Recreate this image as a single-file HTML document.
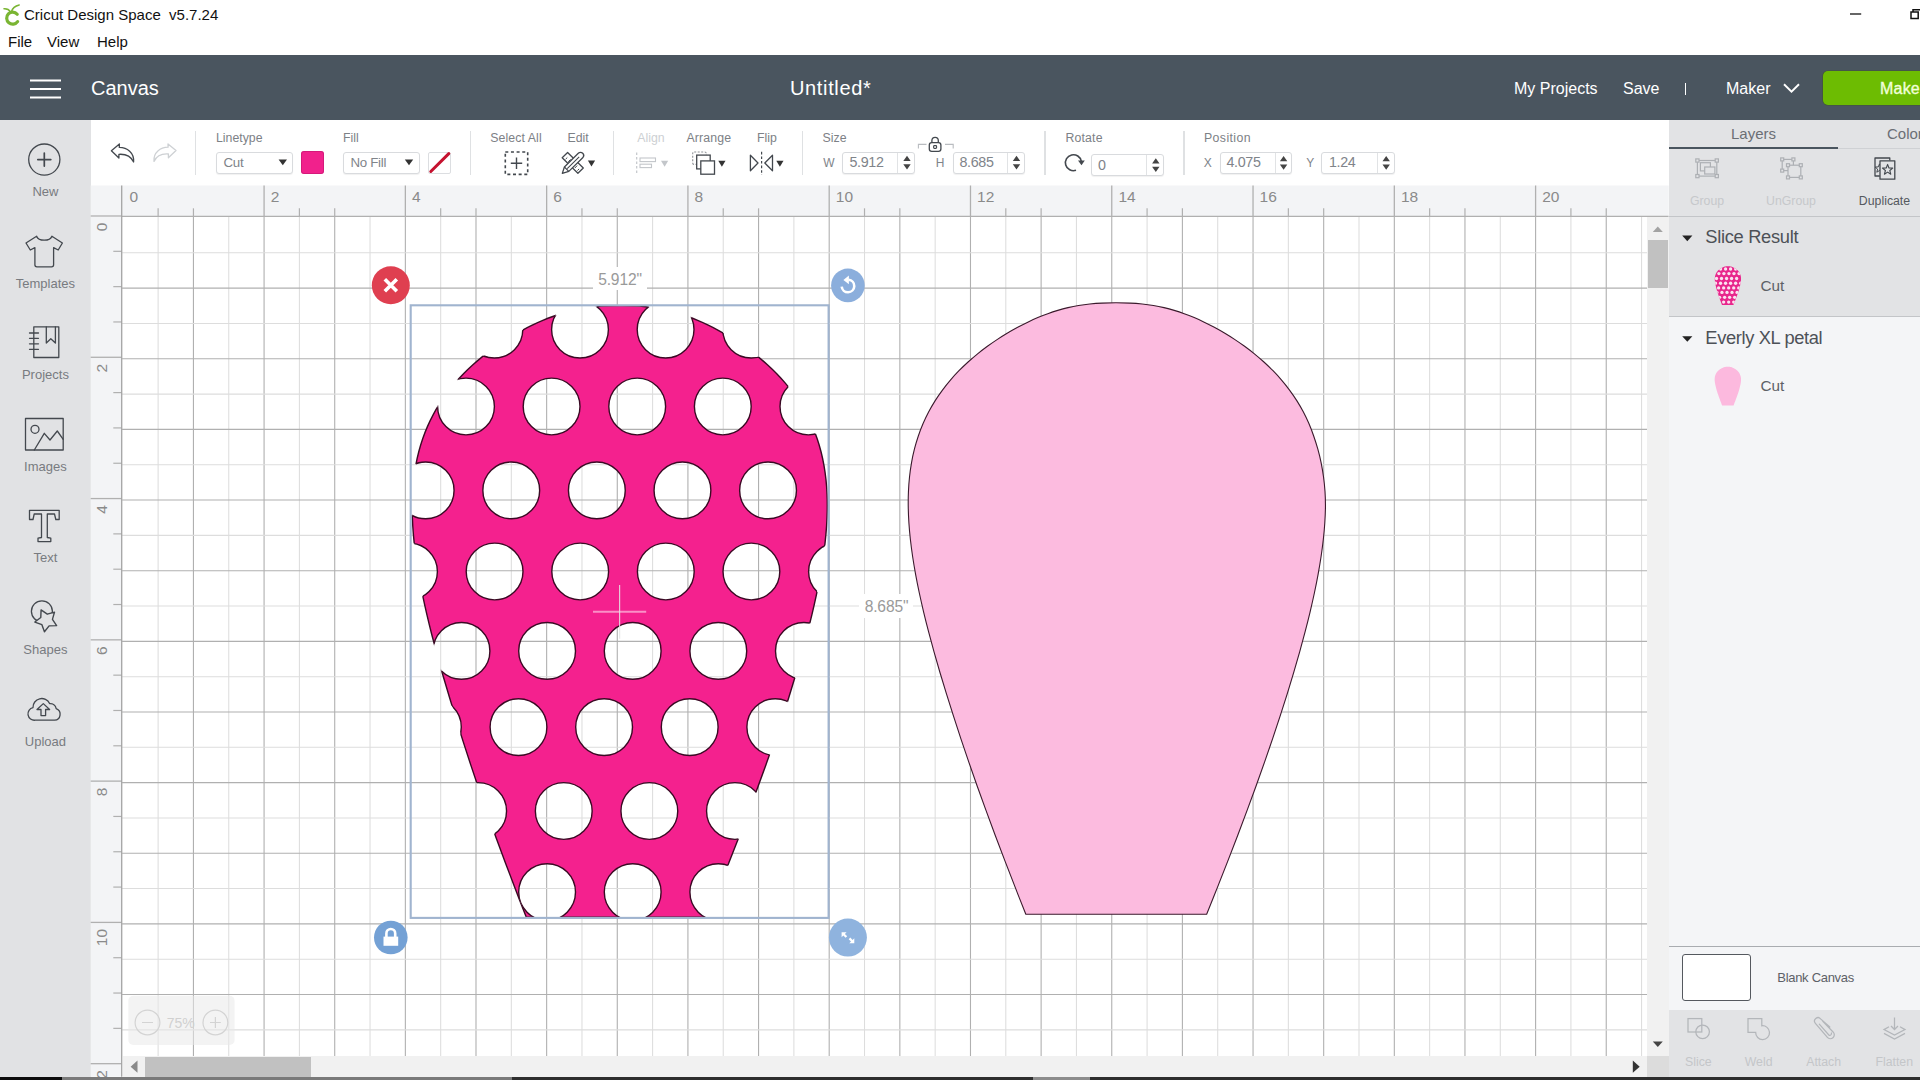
<!DOCTYPE html>
<html lang="en"><head><meta charset="utf-8"><title>Cricut Design Space v5.7.24</title>
<style>
html,body{margin:0;padding:0;}
body{width:1920px;height:1080px;overflow:hidden;position:relative;background:#fff;font-family:"Liberation Sans",sans-serif;}
svg{position:absolute;left:0;top:0;overflow:visible;}
svg text{font-family:"Liberation Sans",sans-serif;}
</style></head><body>

<div style="position:absolute;left:0px;top:0px;width:1920px;height:55px;background:#fff;"></div>
<span style="position:absolute;top:6.2px;font-size:15px;line-height:18.0px;color:#111;white-space:nowrap;left:24px;">Cricut Design Space&nbsp; v5.7.24</span>
<span style="position:absolute;top:33.2px;font-size:15px;line-height:18.0px;color:#111;white-space:nowrap;left:8px;">File</span>
<span style="position:absolute;top:33.2px;font-size:15px;line-height:18.0px;color:#111;white-space:nowrap;left:47px;">View</span>
<span style="position:absolute;top:33.2px;font-size:15px;line-height:18.0px;color:#111;white-space:nowrap;left:97px;">Help</span>
<div style="position:absolute;left:0px;top:55px;width:1920px;height:65.3px;background:#4a555f;"></div>
<span style="position:absolute;top:76.2px;font-size:20px;line-height:24.0px;color:#fff;white-space:nowrap;left:91px;">Canvas</span>
<span style="position:absolute;top:76.2px;font-size:20px;line-height:24.0px;color:#fff;white-space:nowrap;letter-spacing:0.65px;left:790px;">Untitled*</span>
<span style="position:absolute;top:78.6px;font-size:16px;line-height:19.2px;color:#fff;white-space:nowrap;left:1514px;">My Projects</span>
<span style="position:absolute;top:78.6px;font-size:16px;line-height:19.2px;color:#fff;white-space:nowrap;left:1623px;">Save</span>
<div style="position:absolute;left:1684.6px;top:83px;width:1.3px;height:11.5px;background:#fff;"></div>
<span style="position:absolute;top:78.6px;font-size:16px;line-height:19.2px;color:#fff;white-space:nowrap;left:1726px;">Maker</span>
<div style="position:absolute;left:1823px;top:70.6px;width:110px;height:34.6px;background:#6dbc02;border-radius:5px;box-shadow:0 0 0 0.6px rgba(60,90,20,0.6);"></div>
<span style="position:absolute;top:78.6px;font-size:16px;line-height:19.2px;color:#f1ffd9;white-space:nowrap;letter-spacing:0.2px;left:1880px;-webkit-text-stroke:0.35px #f1ffd9;">Make It</span>
<div style="position:absolute;left:0px;top:120.3px;width:90.7px;height:956.4px;background:#e1e2e4;"></div>
<span style="position:absolute;top:184.4px;font-size:13px;line-height:15.6px;color:#787b80;white-space:nowrap;left:-154.6px;width:400px;text-align:center;">New</span>
<span style="position:absolute;top:275.8px;font-size:13px;line-height:15.6px;color:#787b80;white-space:nowrap;left:-154.6px;width:400px;text-align:center;">Templates</span>
<span style="position:absolute;top:367.4px;font-size:13px;line-height:15.6px;color:#787b80;white-space:nowrap;left:-154.6px;width:400px;text-align:center;">Projects</span>
<span style="position:absolute;top:458.8px;font-size:13px;line-height:15.6px;color:#787b80;white-space:nowrap;left:-154.6px;width:400px;text-align:center;">Images</span>
<span style="position:absolute;top:550.4px;font-size:13px;line-height:15.6px;color:#787b80;white-space:nowrap;left:-154.6px;width:400px;text-align:center;">Text</span>
<span style="position:absolute;top:642.1px;font-size:13px;line-height:15.6px;color:#787b80;white-space:nowrap;left:-154.6px;width:400px;text-align:center;">Shapes</span>
<span style="position:absolute;top:733.6px;font-size:13px;line-height:15.6px;color:#787b80;white-space:nowrap;left:-154.6px;width:400px;text-align:center;">Upload</span>
<div style="position:absolute;left:90.7px;top:120.3px;width:1578px;height:65.2px;background:#fff;"></div>
<div style="position:absolute;left:195.0px;top:130.6px;width:1.2px;height:44.6px;background:#dfe1e3;"></div>
<div style="position:absolute;left:469.7px;top:130.6px;width:1.2px;height:44.6px;background:#dfe1e3;"></div>
<div style="position:absolute;left:613.1999999999999px;top:130.6px;width:1.2px;height:44.6px;background:#dfe1e3;"></div>
<div style="position:absolute;left:802.1px;top:130.6px;width:1.2px;height:44.6px;background:#dfe1e3;"></div>
<div style="position:absolute;left:1044.4px;top:130.6px;width:1.2px;height:44.6px;background:#dfe1e3;"></div>
<div style="position:absolute;left:1183.4px;top:130.6px;width:1.2px;height:44.6px;background:#dfe1e3;"></div>
<span style="position:absolute;top:131.1px;font-size:12.3px;line-height:14.8px;color:#7d8186;white-space:nowrap;left:216px;">Linetype</span>
<span style="position:absolute;top:131.1px;font-size:12.3px;line-height:14.8px;color:#7d8186;white-space:nowrap;left:343px;">Fill</span>
<span style="position:absolute;top:131.1px;font-size:12.3px;line-height:14.8px;color:#7d8186;white-space:nowrap;letter-spacing:0.1px;left:490.2px;">Select All</span>
<span style="position:absolute;top:131.1px;font-size:12.3px;line-height:14.8px;color:#7d8186;white-space:nowrap;left:567.5px;">Edit</span>
<span style="position:absolute;top:131.1px;font-size:12.3px;line-height:14.8px;color:#cdd0d3;white-space:nowrap;left:637.3px;">Align</span>
<span style="position:absolute;top:131.1px;font-size:12.3px;line-height:14.8px;color:#7d8186;white-space:nowrap;letter-spacing:0.15px;left:686.5px;">Arrange</span>
<span style="position:absolute;top:131.1px;font-size:12.3px;line-height:14.8px;color:#7d8186;white-space:nowrap;left:757px;">Flip</span>
<span style="position:absolute;top:131.1px;font-size:12.3px;line-height:14.8px;color:#7d8186;white-space:nowrap;left:822.6px;">Size</span>
<span style="position:absolute;top:131.1px;font-size:12.3px;line-height:14.8px;color:#7d8186;white-space:nowrap;letter-spacing:0.15px;left:1065.5px;">Rotate</span>
<span style="position:absolute;top:131.1px;font-size:12.3px;line-height:14.8px;color:#7d8186;white-space:nowrap;letter-spacing:0.4px;left:1204px;">Position</span>
<div style="position:absolute;left:216.2px;top:151.5px;width:75px;height:20.3px;border:1px solid #d9dbde;border-radius:3px;background:#fff;box-shadow:0 1px 1px rgba(0,0,0,0.06)"></div>
<span style="position:absolute;top:155.2px;font-size:13.3px;line-height:16.0px;color:#80848a;white-space:nowrap;letter-spacing:-0.3px;left:223.5px;">Cut</span>
<div style="position:absolute;left:343px;top:151.5px;width:75px;height:20.3px;border:1px solid #d9dbde;border-radius:3px;background:#fff;box-shadow:0 1px 1px rgba(0,0,0,0.06)"></div>
<span style="position:absolute;top:155.2px;font-size:13.3px;line-height:16.0px;color:#80848a;white-space:nowrap;letter-spacing:-0.3px;left:350.5px;">No Fill</span>
<div style="position:absolute;left:301px;top:151px;width:23px;height:23px;background:#f1218c;border-radius:3px;box-shadow:inset 0 0 0 1px rgba(190,20,110,0.55);"></div>
<div style="position:absolute;left:428px;top:151.5px;width:21px;height:20.5px;border:1px solid #dcdee1;border-radius:2px;background:#fff"></div>
<div style="position:absolute;left:842.3px;top:151.5px;width:70.7px;height:20px;border:1px solid #d9dbde;border-radius:3px;background:#fff;box-shadow:0 1px 1px rgba(0,0,0,0.06)"></div>
<span style="position:absolute;top:154.0px;font-size:14.3px;line-height:17.2px;color:#80848a;white-space:nowrap;letter-spacing:-0.35px;left:849.5px;">5.912</span>
<div style="position:absolute;left:897.2px;top:152.5px;width:1px;height:20px;background:#e1e3e5;"></div>
<div style="position:absolute;left:952.7px;top:151.5px;width:70.3px;height:20px;border:1px solid #d9dbde;border-radius:3px;background:#fff;box-shadow:0 1px 1px rgba(0,0,0,0.06)"></div>
<span style="position:absolute;top:154.0px;font-size:14.3px;line-height:17.2px;color:#80848a;white-space:nowrap;letter-spacing:-0.35px;left:959.5px;">8.685</span>
<div style="position:absolute;left:1007.2px;top:152.5px;width:1px;height:20px;background:#e1e3e5;"></div>
<div style="position:absolute;left:1090.7px;top:154px;width:71.6px;height:20px;border:1px solid #d9dbde;border-radius:3px;background:#fff;box-shadow:0 1px 1px rgba(0,0,0,0.06)"></div>
<span style="position:absolute;top:156.5px;font-size:14.3px;line-height:17.2px;color:#80848a;white-space:nowrap;letter-spacing:-0.35px;left:1098px;">0</span>
<div style="position:absolute;left:1146.2px;top:155px;width:1px;height:20px;background:#e1e3e5;"></div>
<div style="position:absolute;left:1219.7px;top:151.5px;width:70.8px;height:20.5px;border:1px solid #d9dbde;border-radius:3px;background:#fff;box-shadow:0 1px 1px rgba(0,0,0,0.06)"></div>
<span style="position:absolute;top:154.3px;font-size:14.3px;line-height:17.2px;color:#80848a;white-space:nowrap;letter-spacing:-0.35px;left:1226.5px;">4.075</span>
<div style="position:absolute;left:1274.7px;top:152.5px;width:1px;height:20.5px;background:#e1e3e5;"></div>
<div style="position:absolute;left:1321.4px;top:151.5px;width:71.2px;height:20.5px;border:1px solid #d9dbde;border-radius:3px;background:#fff;box-shadow:0 1px 1px rgba(0,0,0,0.06)"></div>
<span style="position:absolute;top:154.3px;font-size:14.3px;line-height:17.2px;color:#80848a;white-space:nowrap;letter-spacing:-0.35px;left:1329px;">1.24</span>
<div style="position:absolute;left:1377.2px;top:152.5px;width:1px;height:20.5px;background:#e1e3e5;"></div>
<span style="position:absolute;top:156.0px;font-size:12px;line-height:14.4px;color:#80848a;white-space:nowrap;left:823.2px;">W</span>
<span style="position:absolute;top:156.0px;font-size:12px;line-height:14.4px;color:#80848a;white-space:nowrap;left:935.8px;">H</span>
<span style="position:absolute;top:156.0px;font-size:12px;line-height:14.4px;color:#80848a;white-space:nowrap;left:1203.8px;">X</span>
<span style="position:absolute;top:156.0px;font-size:12px;line-height:14.4px;color:#80848a;white-space:nowrap;left:1306.2px;">Y</span>
<div style="position:absolute;left:1668.6px;top:120.3px;width:252px;height:97px;background:#e2e3e5;"></div>
<div style="position:absolute;left:1668.6px;top:216.7px;width:252px;height:100px;background:#e2e3e5;"></div>
<div style="position:absolute;left:1668.6px;top:316.7px;width:252px;height:693.5px;background:#f4f5f7;"></div>
<div style="position:absolute;left:1668.6px;top:1010px;width:252px;height:66.7px;background:#e2e3e5;"></div>
<div style="position:absolute;left:1668.6px;top:147.3px;width:169.4px;height:2.2px;background:#4a555f;"></div>
<div style="position:absolute;left:1838px;top:147.8px;width:82px;height:1.6px;background:#cfd1d4;"></div>
<div style="position:absolute;left:1668.6px;top:216.2px;width:252px;height:1.2px;background:#c3c5c8;"></div>
<div style="position:absolute;left:1668.6px;top:316.2px;width:252px;height:1.2px;background:#c3c5c8;"></div>
<div style="position:absolute;left:1668.6px;top:946.2px;width:252px;height:1.1px;background:#a9acb0;"></div>
<span style="position:absolute;top:125.2px;font-size:15px;line-height:18.0px;color:#6b6f75;white-space:nowrap;left:1553.5px;width:400px;text-align:center;">Layers</span>
<span style="position:absolute;top:125.2px;font-size:15px;line-height:18.0px;color:#6b6f75;white-space:nowrap;left:1887px;">Color Sync</span>
<span style="position:absolute;top:194.2px;font-size:12.3px;line-height:14.8px;color:#c6c8cb;white-space:nowrap;left:1507px;width:400px;text-align:center;">Group</span>
<span style="position:absolute;top:194.2px;font-size:12.3px;line-height:14.8px;color:#c6c8cb;white-space:nowrap;left:1591px;width:400px;text-align:center;">UnGroup</span>
<span style="position:absolute;top:194.2px;font-size:12.3px;line-height:14.8px;color:#55595f;white-space:nowrap;left:1684.5px;width:400px;text-align:center;">Duplicate</span>
<span style="position:absolute;top:226.2px;font-size:18.3px;line-height:22.0px;color:#4d5157;white-space:nowrap;letter-spacing:-0.3px;left:1705.3px;">Slice Result</span>
<span style="position:absolute;top:327.2px;font-size:18.3px;line-height:22.0px;color:#4d5157;white-space:nowrap;letter-spacing:-0.35px;left:1705.3px;">Everly XL petal</span>
<span style="position:absolute;top:277.0px;font-size:15.3px;line-height:18.4px;color:#5d6167;white-space:nowrap;left:1760.5px;">Cut</span>
<span style="position:absolute;top:377.2px;font-size:15.3px;line-height:18.4px;color:#5d6167;white-space:nowrap;left:1760.5px;">Cut</span>
<span style="position:absolute;top:969.9px;font-size:13px;line-height:15.6px;color:#5d6167;white-space:nowrap;letter-spacing:-0.3px;left:1777.3px;">Blank Canvas</span>
<span style="position:absolute;top:1055.3px;font-size:12.3px;line-height:14.8px;color:#c4c6c9;white-space:nowrap;left:1498.3px;width:400px;text-align:center;">Slice</span>
<span style="position:absolute;top:1055.3px;font-size:12.3px;line-height:14.8px;color:#c4c6c9;white-space:nowrap;left:1558.6px;width:400px;text-align:center;">Weld</span>
<span style="position:absolute;top:1055.3px;font-size:12.3px;line-height:14.8px;color:#c4c6c9;white-space:nowrap;left:1623.7px;width:400px;text-align:center;">Attach</span>
<span style="position:absolute;top:1055.3px;font-size:12.3px;line-height:14.8px;color:#c4c6c9;white-space:nowrap;left:1694.2px;width:400px;text-align:center;">Flatten</span>
<div style="position:absolute;left:1682.2px;top:954.2px;width:66.4px;height:44.4px;border:1.5px solid #55595f;border-radius:3px;background:#fff"></div>
<svg id="stage" width="1920" height="1080" viewBox="0 0 1920 1080">
<rect x="122" y="217" width="1525.2" height="839" fill="#fff"/>
<g id="grid"><line x1="158.12" y1="217" x2="158.12" y2="1056" stroke="#dddddd" stroke-width="1.05"/><line x1="193.44" y1="217" x2="193.44" y2="1056" stroke="#b0b0b0" stroke-width="1.1"/><line x1="228.76" y1="217" x2="228.76" y2="1056" stroke="#dddddd" stroke-width="1.05"/><line x1="264.08" y1="217" x2="264.08" y2="1056" stroke="#b0b0b0" stroke-width="1.1"/><line x1="299.40" y1="217" x2="299.40" y2="1056" stroke="#dddddd" stroke-width="1.05"/><line x1="334.72" y1="217" x2="334.72" y2="1056" stroke="#b0b0b0" stroke-width="1.1"/><line x1="370.04" y1="217" x2="370.04" y2="1056" stroke="#dddddd" stroke-width="1.05"/><line x1="405.36" y1="217" x2="405.36" y2="1056" stroke="#b0b0b0" stroke-width="1.1"/><line x1="440.68" y1="217" x2="440.68" y2="1056" stroke="#dddddd" stroke-width="1.05"/><line x1="476.00" y1="217" x2="476.00" y2="1056" stroke="#b0b0b0" stroke-width="1.1"/><line x1="511.32" y1="217" x2="511.32" y2="1056" stroke="#dddddd" stroke-width="1.05"/><line x1="546.64" y1="217" x2="546.64" y2="1056" stroke="#b0b0b0" stroke-width="1.1"/><line x1="581.96" y1="217" x2="581.96" y2="1056" stroke="#dddddd" stroke-width="1.05"/><line x1="617.28" y1="217" x2="617.28" y2="1056" stroke="#b0b0b0" stroke-width="1.1"/><line x1="652.60" y1="217" x2="652.60" y2="1056" stroke="#dddddd" stroke-width="1.05"/><line x1="687.92" y1="217" x2="687.92" y2="1056" stroke="#b0b0b0" stroke-width="1.1"/><line x1="723.24" y1="217" x2="723.24" y2="1056" stroke="#dddddd" stroke-width="1.05"/><line x1="758.56" y1="217" x2="758.56" y2="1056" stroke="#b0b0b0" stroke-width="1.1"/><line x1="793.88" y1="217" x2="793.88" y2="1056" stroke="#dddddd" stroke-width="1.05"/><line x1="829.20" y1="217" x2="829.20" y2="1056" stroke="#b0b0b0" stroke-width="1.1"/><line x1="864.52" y1="217" x2="864.52" y2="1056" stroke="#dddddd" stroke-width="1.05"/><line x1="899.84" y1="217" x2="899.84" y2="1056" stroke="#b0b0b0" stroke-width="1.1"/><line x1="935.16" y1="217" x2="935.16" y2="1056" stroke="#dddddd" stroke-width="1.05"/><line x1="970.48" y1="217" x2="970.48" y2="1056" stroke="#b0b0b0" stroke-width="1.1"/><line x1="1005.80" y1="217" x2="1005.80" y2="1056" stroke="#dddddd" stroke-width="1.05"/><line x1="1041.12" y1="217" x2="1041.12" y2="1056" stroke="#b0b0b0" stroke-width="1.1"/><line x1="1076.44" y1="217" x2="1076.44" y2="1056" stroke="#dddddd" stroke-width="1.05"/><line x1="1111.76" y1="217" x2="1111.76" y2="1056" stroke="#b0b0b0" stroke-width="1.1"/><line x1="1147.08" y1="217" x2="1147.08" y2="1056" stroke="#dddddd" stroke-width="1.05"/><line x1="1182.40" y1="217" x2="1182.40" y2="1056" stroke="#b0b0b0" stroke-width="1.1"/><line x1="1217.72" y1="217" x2="1217.72" y2="1056" stroke="#dddddd" stroke-width="1.05"/><line x1="1253.04" y1="217" x2="1253.04" y2="1056" stroke="#b0b0b0" stroke-width="1.1"/><line x1="1288.36" y1="217" x2="1288.36" y2="1056" stroke="#dddddd" stroke-width="1.05"/><line x1="1323.68" y1="217" x2="1323.68" y2="1056" stroke="#b0b0b0" stroke-width="1.1"/><line x1="1359.00" y1="217" x2="1359.00" y2="1056" stroke="#dddddd" stroke-width="1.05"/><line x1="1394.32" y1="217" x2="1394.32" y2="1056" stroke="#b0b0b0" stroke-width="1.1"/><line x1="1429.64" y1="217" x2="1429.64" y2="1056" stroke="#dddddd" stroke-width="1.05"/><line x1="1464.96" y1="217" x2="1464.96" y2="1056" stroke="#b0b0b0" stroke-width="1.1"/><line x1="1500.28" y1="217" x2="1500.28" y2="1056" stroke="#dddddd" stroke-width="1.05"/><line x1="1535.60" y1="217" x2="1535.60" y2="1056" stroke="#b0b0b0" stroke-width="1.1"/><line x1="1570.92" y1="217" x2="1570.92" y2="1056" stroke="#dddddd" stroke-width="1.05"/><line x1="1606.24" y1="217" x2="1606.24" y2="1056" stroke="#b0b0b0" stroke-width="1.1"/><line x1="1641.56" y1="217" x2="1641.56" y2="1056" stroke="#dddddd" stroke-width="1.05"/><line x1="122" y1="252.82" x2="1647.2" y2="252.82" stroke="#dddddd" stroke-width="1.05"/><line x1="122" y1="288.14" x2="1647.2" y2="288.14" stroke="#b0b0b0" stroke-width="1.1"/><line x1="122" y1="323.46" x2="1647.2" y2="323.46" stroke="#dddddd" stroke-width="1.05"/><line x1="122" y1="358.78" x2="1647.2" y2="358.78" stroke="#b0b0b0" stroke-width="1.1"/><line x1="122" y1="394.10" x2="1647.2" y2="394.10" stroke="#dddddd" stroke-width="1.05"/><line x1="122" y1="429.42" x2="1647.2" y2="429.42" stroke="#b0b0b0" stroke-width="1.1"/><line x1="122" y1="464.74" x2="1647.2" y2="464.74" stroke="#dddddd" stroke-width="1.05"/><line x1="122" y1="500.06" x2="1647.2" y2="500.06" stroke="#b0b0b0" stroke-width="1.1"/><line x1="122" y1="535.38" x2="1647.2" y2="535.38" stroke="#dddddd" stroke-width="1.05"/><line x1="122" y1="570.70" x2="1647.2" y2="570.70" stroke="#b0b0b0" stroke-width="1.1"/><line x1="122" y1="606.02" x2="1647.2" y2="606.02" stroke="#dddddd" stroke-width="1.05"/><line x1="122" y1="641.34" x2="1647.2" y2="641.34" stroke="#b0b0b0" stroke-width="1.1"/><line x1="122" y1="676.66" x2="1647.2" y2="676.66" stroke="#dddddd" stroke-width="1.05"/><line x1="122" y1="711.98" x2="1647.2" y2="711.98" stroke="#b0b0b0" stroke-width="1.1"/><line x1="122" y1="747.30" x2="1647.2" y2="747.30" stroke="#dddddd" stroke-width="1.05"/><line x1="122" y1="782.62" x2="1647.2" y2="782.62" stroke="#b0b0b0" stroke-width="1.1"/><line x1="122" y1="817.94" x2="1647.2" y2="817.94" stroke="#dddddd" stroke-width="1.05"/><line x1="122" y1="853.26" x2="1647.2" y2="853.26" stroke="#b0b0b0" stroke-width="1.1"/><line x1="122" y1="888.58" x2="1647.2" y2="888.58" stroke="#dddddd" stroke-width="1.05"/><line x1="122" y1="923.90" x2="1647.2" y2="923.90" stroke="#b0b0b0" stroke-width="1.1"/><line x1="122" y1="959.22" x2="1647.2" y2="959.22" stroke="#dddddd" stroke-width="1.05"/><line x1="122" y1="994.54" x2="1647.2" y2="994.54" stroke="#b0b0b0" stroke-width="1.1"/><line x1="122" y1="1029.86" x2="1647.2" y2="1029.86" stroke="#dddddd" stroke-width="1.05"/></g>
<rect x="90.7" y="185.5" width="1578" height="31" fill="#f3f4f6"/>
<rect x="90.7" y="216.5" width="31.4" height="860.2" fill="#f3f4f6"/>
<g id="rulers"><text x="129.4" y="202.3" font-size="15.5" fill="#8a8a8a">0</text><line x1="158.12" y1="208.3" x2="158.12" y2="217" stroke="#b0b0b0" stroke-width="1.2"/><line x1="193.44" y1="208.3" x2="193.44" y2="217" stroke="#b0b0b0" stroke-width="1.2"/><line x1="264.08" y1="185.5" x2="264.08" y2="217" stroke="#b0b0b0" stroke-width="1.3"/><text x="270.7" y="202.3" font-size="15.5" fill="#8a8a8a">2</text><line x1="299.40" y1="208.3" x2="299.40" y2="217" stroke="#b0b0b0" stroke-width="1.2"/><line x1="334.72" y1="208.3" x2="334.72" y2="217" stroke="#b0b0b0" stroke-width="1.2"/><line x1="405.36" y1="185.5" x2="405.36" y2="217" stroke="#b0b0b0" stroke-width="1.3"/><text x="412.0" y="202.3" font-size="15.5" fill="#8a8a8a">4</text><line x1="440.68" y1="208.3" x2="440.68" y2="217" stroke="#b0b0b0" stroke-width="1.2"/><line x1="476.00" y1="208.3" x2="476.00" y2="217" stroke="#b0b0b0" stroke-width="1.2"/><line x1="546.64" y1="185.5" x2="546.64" y2="217" stroke="#b0b0b0" stroke-width="1.3"/><text x="553.2" y="202.3" font-size="15.5" fill="#8a8a8a">6</text><line x1="581.96" y1="208.3" x2="581.96" y2="217" stroke="#b0b0b0" stroke-width="1.2"/><line x1="617.28" y1="208.3" x2="617.28" y2="217" stroke="#b0b0b0" stroke-width="1.2"/><line x1="687.92" y1="185.5" x2="687.92" y2="217" stroke="#b0b0b0" stroke-width="1.3"/><text x="694.5" y="202.3" font-size="15.5" fill="#8a8a8a">8</text><line x1="723.24" y1="208.3" x2="723.24" y2="217" stroke="#b0b0b0" stroke-width="1.2"/><line x1="758.56" y1="208.3" x2="758.56" y2="217" stroke="#b0b0b0" stroke-width="1.2"/><line x1="829.20" y1="185.5" x2="829.20" y2="217" stroke="#b0b0b0" stroke-width="1.3"/><text x="835.8" y="202.3" font-size="15.5" fill="#8a8a8a">10</text><line x1="864.52" y1="208.3" x2="864.52" y2="217" stroke="#b0b0b0" stroke-width="1.2"/><line x1="899.84" y1="208.3" x2="899.84" y2="217" stroke="#b0b0b0" stroke-width="1.2"/><line x1="970.48" y1="185.5" x2="970.48" y2="217" stroke="#b0b0b0" stroke-width="1.3"/><text x="977.1" y="202.3" font-size="15.5" fill="#8a8a8a">12</text><line x1="1005.80" y1="208.3" x2="1005.80" y2="217" stroke="#b0b0b0" stroke-width="1.2"/><line x1="1041.12" y1="208.3" x2="1041.12" y2="217" stroke="#b0b0b0" stroke-width="1.2"/><line x1="1111.76" y1="185.5" x2="1111.76" y2="217" stroke="#b0b0b0" stroke-width="1.3"/><text x="1118.4" y="202.3" font-size="15.5" fill="#8a8a8a">14</text><line x1="1147.08" y1="208.3" x2="1147.08" y2="217" stroke="#b0b0b0" stroke-width="1.2"/><line x1="1182.40" y1="208.3" x2="1182.40" y2="217" stroke="#b0b0b0" stroke-width="1.2"/><line x1="1253.04" y1="185.5" x2="1253.04" y2="217" stroke="#b0b0b0" stroke-width="1.3"/><text x="1259.6" y="202.3" font-size="15.5" fill="#8a8a8a">16</text><line x1="1288.36" y1="208.3" x2="1288.36" y2="217" stroke="#b0b0b0" stroke-width="1.2"/><line x1="1323.68" y1="208.3" x2="1323.68" y2="217" stroke="#b0b0b0" stroke-width="1.2"/><line x1="1394.32" y1="185.5" x2="1394.32" y2="217" stroke="#b0b0b0" stroke-width="1.3"/><text x="1400.9" y="202.3" font-size="15.5" fill="#8a8a8a">18</text><line x1="1429.64" y1="208.3" x2="1429.64" y2="217" stroke="#b0b0b0" stroke-width="1.2"/><line x1="1464.96" y1="208.3" x2="1464.96" y2="217" stroke="#b0b0b0" stroke-width="1.2"/><line x1="1535.60" y1="185.5" x2="1535.60" y2="217" stroke="#b0b0b0" stroke-width="1.3"/><text x="1542.2" y="202.3" font-size="15.5" fill="#8a8a8a">20</text><line x1="1570.92" y1="208.3" x2="1570.92" y2="217" stroke="#b0b0b0" stroke-width="1.2"/><line x1="1606.24" y1="208.3" x2="1606.24" y2="217" stroke="#b0b0b0" stroke-width="1.2"/><line x1="90.7" y1="216.00" x2="122" y2="216.00" stroke="#b0b0b0" stroke-width="1.3"/><text transform="translate(107.2,222.5) rotate(-90)" font-size="15.5" fill="#8a8a8a" text-anchor="end">0</text><line x1="113.3" y1="251.32" x2="122" y2="251.32" stroke="#b0b0b0" stroke-width="1.2"/><line x1="113.3" y1="286.64" x2="122" y2="286.64" stroke="#b0b0b0" stroke-width="1.2"/><line x1="113.3" y1="321.96" x2="122" y2="321.96" stroke="#b0b0b0" stroke-width="1.2"/><line x1="90.7" y1="357.28" x2="122" y2="357.28" stroke="#b0b0b0" stroke-width="1.3"/><text transform="translate(107.2,363.8) rotate(-90)" font-size="15.5" fill="#8a8a8a" text-anchor="end">2</text><line x1="113.3" y1="392.60" x2="122" y2="392.60" stroke="#b0b0b0" stroke-width="1.2"/><line x1="113.3" y1="427.92" x2="122" y2="427.92" stroke="#b0b0b0" stroke-width="1.2"/><line x1="113.3" y1="463.24" x2="122" y2="463.24" stroke="#b0b0b0" stroke-width="1.2"/><line x1="90.7" y1="498.56" x2="122" y2="498.56" stroke="#b0b0b0" stroke-width="1.3"/><text transform="translate(107.2,505.1) rotate(-90)" font-size="15.5" fill="#8a8a8a" text-anchor="end">4</text><line x1="113.3" y1="533.88" x2="122" y2="533.88" stroke="#b0b0b0" stroke-width="1.2"/><line x1="113.3" y1="569.20" x2="122" y2="569.20" stroke="#b0b0b0" stroke-width="1.2"/><line x1="113.3" y1="604.52" x2="122" y2="604.52" stroke="#b0b0b0" stroke-width="1.2"/><line x1="90.7" y1="639.84" x2="122" y2="639.84" stroke="#b0b0b0" stroke-width="1.3"/><text transform="translate(107.2,646.3) rotate(-90)" font-size="15.5" fill="#8a8a8a" text-anchor="end">6</text><line x1="113.3" y1="675.16" x2="122" y2="675.16" stroke="#b0b0b0" stroke-width="1.2"/><line x1="113.3" y1="710.48" x2="122" y2="710.48" stroke="#b0b0b0" stroke-width="1.2"/><line x1="113.3" y1="745.80" x2="122" y2="745.80" stroke="#b0b0b0" stroke-width="1.2"/><line x1="90.7" y1="781.12" x2="122" y2="781.12" stroke="#b0b0b0" stroke-width="1.3"/><text transform="translate(107.2,787.6) rotate(-90)" font-size="15.5" fill="#8a8a8a" text-anchor="end">8</text><line x1="113.3" y1="816.44" x2="122" y2="816.44" stroke="#b0b0b0" stroke-width="1.2"/><line x1="113.3" y1="851.76" x2="122" y2="851.76" stroke="#b0b0b0" stroke-width="1.2"/><line x1="113.3" y1="887.08" x2="122" y2="887.08" stroke="#b0b0b0" stroke-width="1.2"/><line x1="90.7" y1="922.40" x2="122" y2="922.40" stroke="#b0b0b0" stroke-width="1.3"/><text transform="translate(107.2,928.9) rotate(-90)" font-size="15.5" fill="#8a8a8a" text-anchor="end">10</text><line x1="113.3" y1="957.72" x2="122" y2="957.72" stroke="#b0b0b0" stroke-width="1.2"/><line x1="113.3" y1="993.04" x2="122" y2="993.04" stroke="#b0b0b0" stroke-width="1.2"/><line x1="113.3" y1="1028.36" x2="122" y2="1028.36" stroke="#b0b0b0" stroke-width="1.2"/><line x1="90.7" y1="1063.68" x2="122" y2="1063.68" stroke="#b0b0b0" stroke-width="1.3"/><text transform="translate(107.2,1070.2) rotate(-90)" font-size="15.5" fill="#8a8a8a" text-anchor="end">12</text><line x1="122" y1="216.4" x2="1668.6" y2="216.4" stroke="#b0b0b0" stroke-width="1.4"/><line x1="121.7" y1="185.5" x2="121.7" y2="1076.7" stroke="#a4a4a4" stroke-width="1.3"/></g>
<defs><path id="petal" d="M1022.73,914.30C1021.00,909.82 1015.73,896.28 1012.33,887.42C1008.93,878.57 1005.59,869.81 1002.33,861.15C999.07,852.50 995.86,843.94 992.77,835.48C989.68,827.03 986.69,818.67 983.78,810.42C980.87,802.17 978.04,794.01 975.29,785.96C972.53,777.91 969.85,769.96 967.25,762.10C964.65,754.25 962.13,746.50 959.68,738.85C957.23,731.20 954.87,723.65 952.57,716.20C950.27,708.76 948.05,701.41 945.87,694.16C943.69,686.91 941.53,679.77 939.48,672.72C937.44,665.67 935.48,658.73 933.60,651.88C931.73,645.04 929.94,638.29 928.25,631.65C926.56,625.01 924.95,618.46 923.45,612.02C921.95,605.58 920.54,599.24 919.25,593.00C917.95,586.76 916.75,580.62 915.68,574.58C914.60,568.54 913.63,562.60 912.79,556.76C911.95,550.92 911.23,545.19 910.64,539.55C910.05,533.91 909.58,528.38 909.25,522.94C908.93,517.50 908.73,512.17 908.69,506.94C908.64,501.70 908.73,496.57 908.98,491.53C909.22,486.50 909.61,481.57 910.16,476.74C910.70,471.91 911.40,467.18 912.25,462.54C913.10,457.91 914.10,453.39 915.26,448.96C916.41,444.53 917.73,440.20 919.19,435.97C920.65,431.74 922.27,427.62 924.02,423.59C925.78,419.56 927.69,415.64 929.74,411.81C931.78,407.99 933.97,404.26 936.28,400.64C938.59,397.02 941.05,393.49 943.60,390.07C946.16,386.65 948.84,383.33 951.62,380.11C954.39,376.88 957.29,373.76 960.25,370.74C963.21,367.72 966.28,364.81 969.39,361.99C972.51,359.17 975.71,356.45 978.95,353.83C982.19,351.22 985.49,348.70 988.81,346.28C992.13,343.87 995.50,341.55 998.87,339.34C1002.24,337.12 1005.64,335.01 1009.02,333.00C1012.41,330.98 1015.81,329.07 1019.18,327.26C1022.56,325.45 1025.92,323.74 1029.28,322.13C1032.63,320.52 1035.98,319.01 1039.31,317.60C1042.65,316.19 1045.96,314.88 1049.29,313.67C1052.62,312.46 1055.93,311.36 1059.30,310.35C1062.66,309.34 1066.01,308.44 1069.47,307.63C1072.93,306.83 1076.41,306.12 1080.05,305.52C1083.69,304.91 1087.63,304.41 1091.29,304.01C1094.96,303.61 1097.90,303.30 1102.02,303.10C1106.13,302.90 1111.34,302.80 1116.00,302.80C1120.66,302.80 1125.62,302.90 1129.98,303.10C1134.35,303.30 1138.29,303.61 1142.21,304.01C1146.12,304.41 1149.81,304.91 1153.45,305.52C1157.09,306.12 1160.57,306.83 1164.03,307.63C1167.49,308.44 1170.84,309.34 1174.20,310.35C1177.57,311.36 1180.88,312.46 1184.21,313.67C1187.54,314.88 1190.85,316.19 1194.19,317.60C1197.52,319.01 1200.87,320.52 1204.22,322.13C1207.58,323.74 1210.95,325.45 1214.32,327.26C1217.69,329.07 1221.08,330.98 1224.46,333.00C1227.83,335.01 1231.22,337.12 1234.58,339.34C1237.93,341.55 1241.29,343.87 1244.59,346.28C1247.90,348.70 1251.19,351.22 1254.41,353.83C1257.63,356.45 1260.82,359.17 1263.92,361.99C1267.02,364.81 1270.06,367.72 1273.01,370.74C1275.95,373.76 1278.83,376.88 1281.58,380.11C1284.34,383.33 1287.00,386.65 1289.54,390.07C1292.07,393.49 1294.50,397.02 1296.79,400.64C1299.08,404.26 1301.25,407.99 1303.27,411.81C1305.29,415.64 1307.18,419.56 1308.91,423.59C1310.65,427.62 1312.24,431.74 1313.68,435.97C1315.11,440.20 1316.40,444.53 1317.53,448.96C1318.66,453.39 1319.64,457.91 1320.46,462.54C1321.28,467.18 1321.95,471.91 1322.46,476.74C1322.98,481.57 1323.34,486.50 1323.55,491.53C1323.77,496.57 1323.83,501.70 1323.75,506.94C1323.67,512.17 1323.45,517.50 1323.09,522.94C1322.73,528.38 1322.23,533.91 1321.61,539.55C1320.98,545.19 1320.22,550.92 1319.35,556.76C1318.47,562.60 1317.46,568.54 1316.35,574.58C1315.24,580.62 1314.01,586.76 1312.68,593.00C1311.34,599.24 1309.90,605.58 1308.36,612.02C1306.82,618.46 1305.17,625.01 1303.44,631.65C1301.71,638.29 1299.88,645.04 1297.97,651.88C1296.05,658.73 1294.05,665.67 1291.96,672.72C1289.87,679.77 1287.73,686.91 1285.45,694.16C1283.17,701.41 1280.76,708.76 1278.28,716.20C1275.80,723.65 1273.22,731.20 1270.57,738.85C1267.92,746.50 1265.19,754.25 1262.38,762.10C1259.57,769.96 1256.69,777.91 1253.72,785.96C1250.75,794.01 1247.70,802.17 1244.58,810.42C1241.45,818.67 1238.24,827.03 1234.96,835.48C1231.67,843.94 1228.31,852.50 1224.87,861.15C1221.43,869.81 1217.91,878.57 1214.33,887.42C1210.75,896.28 1205.21,909.82 1203.38,914.30Z"/><path id="petalR" d="M1025.83,914.30C1024.06,909.82 1018.69,896.28 1015.23,887.42C1011.76,878.57 1008.36,869.81 1005.03,861.15C1001.71,852.50 998.45,843.94 995.28,835.48C992.10,827.03 989.00,818.67 985.99,810.42C982.97,802.17 980.02,794.01 977.16,785.96C974.30,777.91 971.51,769.96 968.81,762.10C966.10,754.25 963.47,746.50 960.92,738.85C958.37,731.20 955.90,723.65 953.51,716.20C951.11,708.76 948.80,701.41 946.55,694.16C944.31,686.91 942.13,679.77 940.04,672.72C937.95,665.67 935.95,658.73 934.03,651.88C932.12,645.04 930.29,638.29 928.56,631.65C926.83,625.01 925.18,618.46 923.64,612.02C922.10,605.58 920.66,599.24 919.32,593.00C917.99,586.76 916.76,580.62 915.65,574.58C914.54,568.54 913.53,562.60 912.65,556.76C911.78,550.92 911.02,545.19 910.39,539.55C909.77,533.91 909.27,528.38 908.91,522.94C908.55,517.50 908.33,512.17 908.25,506.94C908.17,501.70 908.23,496.57 908.45,491.53C908.66,486.50 909.02,481.57 909.54,476.74C910.05,471.91 910.72,467.18 911.54,462.54C912.36,457.91 913.34,453.39 914.47,448.96C915.60,444.53 916.89,440.20 918.32,435.97C919.76,431.74 921.35,427.62 923.09,423.59C924.82,419.56 926.71,415.64 928.73,411.81C930.75,407.99 932.92,404.26 935.21,400.64C937.50,397.02 939.93,393.49 942.46,390.07C945.00,386.65 947.66,383.33 950.42,380.11C953.17,376.88 956.05,373.76 958.99,370.74C961.94,367.72 964.98,364.81 968.08,361.99C971.18,359.17 974.37,356.45 977.59,353.83C980.81,351.22 984.10,348.70 987.41,346.28C990.71,343.87 994.07,341.55 997.42,339.34C1000.78,337.12 1004.17,335.01 1007.54,333.00C1010.92,330.98 1014.31,329.07 1017.68,327.26C1021.05,325.45 1024.42,323.74 1027.78,322.13C1031.13,320.52 1034.48,319.01 1037.81,317.60C1041.15,316.19 1044.46,314.88 1047.79,313.67C1051.12,312.46 1054.43,311.36 1057.80,310.35C1061.16,309.34 1064.51,308.44 1067.97,307.63C1071.43,306.83 1074.91,306.12 1078.55,305.52C1082.19,304.91 1085.88,304.41 1089.79,304.01C1093.71,303.61 1097.65,303.30 1102.02,303.10C1106.38,302.90 1111.34,302.80 1116.00,302.80C1120.66,302.80 1125.62,302.90 1129.98,303.10C1134.35,303.30 1138.29,303.61 1142.21,304.01C1146.12,304.41 1149.81,304.91 1153.45,305.52C1157.09,306.12 1160.57,306.83 1164.03,307.63C1167.49,308.44 1170.84,309.34 1174.20,310.35C1177.57,311.36 1180.88,312.46 1184.21,313.67C1187.54,314.88 1190.85,316.19 1194.19,317.60C1197.52,319.01 1200.87,320.52 1204.22,322.13C1207.58,323.74 1210.95,325.45 1214.32,327.26C1217.69,329.07 1221.08,330.98 1224.46,333.00C1227.83,335.01 1231.22,337.12 1234.58,339.34C1237.93,341.55 1241.29,343.87 1244.59,346.28C1247.90,348.70 1251.19,351.22 1254.41,353.83C1257.63,356.45 1260.82,359.17 1263.92,361.99C1267.02,364.81 1270.06,367.72 1273.01,370.74C1275.95,373.76 1278.83,376.88 1281.58,380.11C1284.34,383.33 1287.00,386.65 1289.54,390.07C1292.07,393.49 1294.50,397.02 1296.79,400.64C1299.08,404.26 1301.25,407.99 1303.27,411.81C1305.29,415.64 1307.18,419.56 1308.91,423.59C1310.65,427.62 1312.20,431.74 1313.68,435.97C1315.16,440.20 1316.55,444.53 1317.78,448.96C1319.02,453.39 1320.14,457.91 1321.10,462.54C1322.05,467.18 1322.85,471.91 1323.50,476.74C1324.15,481.57 1324.69,486.50 1325.01,491.53C1325.34,496.57 1325.49,501.70 1325.45,506.94C1325.41,512.17 1325.15,517.50 1324.79,522.94C1324.43,528.38 1323.93,533.91 1323.31,539.55C1322.68,545.19 1321.92,550.92 1321.05,556.76C1320.17,562.60 1319.16,568.54 1318.05,574.58C1316.94,580.62 1315.71,586.76 1314.38,593.00C1313.04,599.24 1311.60,605.58 1310.06,612.02C1308.52,618.46 1306.87,625.01 1305.14,631.65C1303.41,638.29 1301.58,645.04 1299.67,651.88C1297.75,658.73 1295.75,665.67 1293.66,672.72C1291.57,679.77 1289.41,686.91 1287.15,694.16C1284.89,701.41 1282.53,708.76 1280.10,716.20C1277.67,723.65 1275.15,731.20 1272.56,738.85C1269.97,746.50 1267.30,754.25 1264.55,762.10C1261.80,769.96 1258.97,777.91 1256.06,785.96C1253.15,794.01 1250.16,802.17 1247.10,810.42C1244.03,818.67 1240.89,827.03 1237.67,835.48C1234.44,843.94 1231.14,852.50 1227.77,861.15C1224.40,869.81 1220.94,878.57 1217.43,887.42C1213.91,896.28 1208.47,909.82 1206.68,914.30Z"/></defs>
<use href="#petalR" fill="#fcbbdf" stroke="#3a1a2c" stroke-width="1.1"/>
<defs><g id="dots"><circle cx="408.80" cy="329.60" r="28.4"/><circle cx="494.40" cy="329.60" r="28.4"/><circle cx="580.00" cy="329.60" r="28.4"/><circle cx="665.60" cy="329.60" r="28.4"/><circle cx="751.20" cy="329.60" r="28.4"/><circle cx="836.80" cy="329.60" r="28.4"/><circle cx="466.00" cy="406.50" r="28.4"/><circle cx="551.60" cy="406.50" r="28.4"/><circle cx="637.20" cy="406.50" r="28.4"/><circle cx="722.80" cy="406.50" r="28.4"/><circle cx="808.40" cy="406.50" r="28.4"/><circle cx="425.65" cy="490.40" r="28.4"/><circle cx="511.25" cy="490.40" r="28.4"/><circle cx="596.85" cy="490.40" r="28.4"/><circle cx="682.45" cy="490.40" r="28.4"/><circle cx="768.05" cy="490.40" r="28.4"/><circle cx="409.00" cy="571.50" r="28.4"/><circle cx="494.60" cy="571.50" r="28.4"/><circle cx="580.20" cy="571.50" r="28.4"/><circle cx="665.80" cy="571.50" r="28.4"/><circle cx="751.40" cy="571.50" r="28.4"/><circle cx="837.00" cy="571.50" r="28.4"/><circle cx="461.50" cy="650.90" r="28.4"/><circle cx="547.10" cy="650.90" r="28.4"/><circle cx="632.70" cy="650.90" r="28.4"/><circle cx="718.30" cy="650.90" r="28.4"/><circle cx="803.90" cy="650.90" r="28.4"/><circle cx="432.90" cy="727.10" r="28.4"/><circle cx="518.50" cy="727.10" r="28.4"/><circle cx="604.10" cy="727.10" r="28.4"/><circle cx="689.70" cy="727.10" r="28.4"/><circle cx="775.30" cy="727.10" r="28.4"/><circle cx="478.15" cy="811.00" r="28.4"/><circle cx="563.75" cy="811.00" r="28.4"/><circle cx="649.35" cy="811.00" r="28.4"/><circle cx="734.95" cy="811.00" r="28.4"/><circle cx="820.55" cy="811.00" r="28.4"/><circle cx="461.50" cy="892.10" r="28.4"/><circle cx="547.10" cy="892.10" r="28.4"/><circle cx="632.70" cy="892.10" r="28.4"/><circle cx="718.30" cy="892.10" r="28.4"/><circle cx="803.90" cy="892.10" r="28.4"/></g><mask id="mHoles" maskUnits="userSpaceOnUse" x="380" y="280" width="480" height="660"><rect x="380" y="280" width="480" height="660" fill="#fff"/><use href="#dots" fill="#000"/></mask><clipPath id="cPet"><use href="#petal" transform="translate(-496.5,2.8)"/></clipPath></defs>
<g mask="url(#mHoles)"><use href="#petal" transform="translate(-496.5,2.8)" fill="#f4218e" stroke="#3a0a24" stroke-width="1.4"/></g>
<g clip-path="url(#cPet)"><use href="#dots" fill="none" stroke="#3a0a24" stroke-width="1.4"/></g>
<rect x="410.7" y="305.3" width="417.9" height="612.6" fill="none" stroke="#a0b4cf" stroke-width="2.1"/>
<path d="M593,611.7H646.2" stroke="#fff" stroke-opacity="0.5" stroke-width="2"/><path d="M619.6,585V638.7" stroke="#e4e4e4" stroke-opacity="0.85" stroke-width="1.2"/>
<rect x="593" y="267" width="54" height="23" fill="#fff"/><text x="620" y="284.8" font-size="15.6" fill="#9a9a9a" text-anchor="middle" letter-spacing="-0.15">5.912"</text>
<rect x="859" y="594" width="54" height="24" fill="#fff"/><text x="886.5" y="611.8" font-size="15.6" fill="#9a9a9a" text-anchor="middle" letter-spacing="-0.15">8.685"</text>
<circle cx="390.8" cy="285.3" r="19" fill="#df3f50"/><path d="M384.8,279.3L396.8,291.3M396.8,279.3L384.8,291.3" stroke="#fff" stroke-width="3.6" fill="none"/>
<circle cx="847.9" cy="285.4" r="16.8" fill="#8baedc"/><path d="M848.6,279.7A6.3,6.3 0 1 1 841.7,286.6" fill="none" stroke="#fff" stroke-width="2.6"/><path d="M843.4,279.9L848.9,275.6V284.2Z" fill="#fff"/>
<circle cx="390.8" cy="937.5" r="16.8" fill="#74a1d5"/><path d="M383.5,936.6H398.2V945.8H383.5Z" fill="#fff"/><path d="M386.4,937V933.4A4.4,4.4 0 0 1 395.2,933.4V937" fill="none" stroke="#fff" stroke-width="2.6"/>
<circle cx="847.9" cy="937.6" r="19" fill="#8fb3de"/><path d="M841.6,932.2H846.6L844.9,933.9L847.2,936.2L845.6,937.8L843.3,935.5L841.6,937.2Z M854.3,943.2H849.3L851,941.5L848.7,939.2L850.3,937.6L852.6,939.9L854.3,938.2Z" fill="#fff"/>
<rect x="128.3" y="995.8" width="106.3" height="49.2" rx="5" fill="#e9e9e9" fill-opacity="0.55"/><g fill="none" stroke="#d3d3d3" stroke-width="1.2"><circle cx="147.5" cy="1022.5" r="12.4"/><circle cx="215.4" cy="1022.5" r="12.4"/><path d="M142,1022.5H153M210,1022.5H220.8M215.4,1017.1V1027.9"/></g><text x="180.8" y="1027.6" font-size="14" fill="#d0d0d0" text-anchor="middle">75%</text>
</svg>
<div style="position:absolute;left:1647.2px;top:217px;width:21.4px;height:839px;background:#f1f1f1;"></div>
<div style="position:absolute;left:1648.2px;top:240px;width:19.6px;height:47.8px;background:#c1c1c1;"></div>
<div style="position:absolute;left:122.8px;top:1055.8px;width:1524.4px;height:21px;background:#f1f1f1;"></div>
<div style="position:absolute;left:145px;top:1056.5px;width:166px;height:20.2px;background:#c1c1c1;"></div>
<div style="position:absolute;left:1647.2px;top:1055.8px;width:21.4px;height:21px;background:#dcdcdc;"></div>
<div style="position:absolute;left:0px;top:1076.7px;width:1920px;height:3.3px;background:#2e2e2e;"></div>
<div style="position:absolute;left:0px;top:1076.7px;width:62px;height:3.3px;background:#0c0c0c;"></div>
<div style="position:absolute;left:62px;top:1076.7px;width:450px;height:3.3px;background:#7a7a7a;"></div>
<div style="position:absolute;left:1033px;top:1076.7px;width:57px;height:3.3px;background:#8c8c8c;"></div>
<svg id="icons" width="1920" height="1080" viewBox="0 0 1920 1080"><defs><clipPath id="cDup"><rect x="1874" y="160" width="6" height="16"/></clipPath></defs><g fill="none" stroke="#7ab533" stroke-linecap="round"><path d="M17.2,14.2A6,6 0 1 0 17.6,21.6" stroke-width="3.2"/><path d="M11.5,11.5C12.5,8 15,6 19.2,5" stroke-width="1.5"/><path d="M10.5,11.8C9,9.5 6.5,8.6 4,8.8" stroke-width="1.5"/></g><path d="M1850,14H1861.2" stroke="#333" stroke-width="1.5"/><path d="M1911,12H1918.2V18.4H1911Z M1913,12V9.7H1921" stroke="#111" stroke-width="1.5" fill="none"/><path d="M30,80.5H61M30,89H61M30,97.5H61" stroke="#fff" stroke-width="2.2"/><path d="M1784,84.2L1791.5,91.6L1799,84.2" stroke="#fff" stroke-width="1.9" fill="none"/><g fill="none" stroke="#43484e" stroke-width="1.3" stroke-linejoin="round" stroke-linecap="round"><circle cx="44.3" cy="159.6" r="15.6"/><path d="M37.8,159.6H50.8M44.3,153.1V166.1" stroke-width="1.7"/><path d="M36.6,236.2C38.5,241.5 50,241.5 51.9,236.2L62.4,243L58.2,250L53.6,247.6V264.8Q53.6,266.8 51.6,266.8H36.9Q34.9,266.8 34.9,264.8V247.6L30.3,250L26,243Z"/><path d="M33.8,326.8H58.8V357.5H33.8Z"/><path d="M46.3,326.8V343L50.8,338.8L55.4,343V326.8"/><path d="M29.5,333H38.5M29.5,338.3H38.5M29.5,343.8H38.5M29.5,349.3H38.5"/><path d="M25.5,418.5H63.2V450H25.5Z"/><circle cx="35" cy="429.3" r="4"/><path d="M34.3,450L44.3,433.3L50,440L57.3,431L63.2,439.3"/><path d="M29.5,510.3H59.2V519.5H55.8L54.5,514H47.3V537.5L50.8,538.2V541.6H38V538.2L41.5,537.5V514H34.2L33,519.5H29.5Z"/><circle cx="41.9" cy="611.3" r="10.5"/><path d="M41.07,609.95L47.29,614.18L54.53,612.13L52.43,619.35L56.62,625.60L49.10,625.83L44.45,631.75L41.90,624.67L34.84,622.07L40.79,617.47Z" fill="#e1e2e4" stroke-width="1.4"/><path d="M35.2,720.2A6.4,6.4 0 0 1 33,707.6A8.7,8.7 0 0 1 49.6,703.6A6.2,6.2 0 0 1 56.2,708.6A6,6 0 0 1 54.6,720.2Z"/><path d="M43.3,703.6L49.6,709.5H45.6V715.6H41V709.5H37Z"/></g><path d="M119.4,143.9L111.4,150.8L118.9,158V154.3C126,153.8 131,156.5 133.6,162C134.4,152.5 127,147.6 119.3,147.4Z" fill="none" stroke="#43484e" stroke-width="1.3" stroke-linejoin="round"/><path d="M168,143.9L176,150.5L168.4,157.7V154C161.5,153.5 156.5,156 154,161.4C153.2,152.2 160.5,147.4 168.1,147.2Z" fill="none" stroke="#ced1d4" stroke-width="1.3" stroke-linejoin="round"/><path d="M278.6,159.6H287.0L282.8,165.2Z" fill="#333"/><path d="M404.8,159.6H413.2L409,165.2Z" fill="#333"/><path d="M430.8,171.5L448.8,153.6" stroke="#c5122f" stroke-width="3" stroke-linecap="round"/><rect x="505.3" y="152" width="22.4" height="22.4" fill="none" stroke="#43484e" stroke-width="1.6" stroke-dasharray="3 2.65"/><path d="M510.8,163.2H522.2M516.5,157.5V168.9" stroke="#43484e" stroke-width="1.4"/><g fill="#fff" stroke="#43484e" stroke-width="1.3" stroke-linejoin="round"><path d="M567.6,152.5L583.3,168L577.9,173.3L562.2,157.8Z"/><path d="M565.6,159.2L567.3,157.5M568.2,161.8L570.6,159.4M577.4,170.6L579.1,168.9M574.8,168L577.2,165.6" fill="none" stroke-width="1"/><path d="M578.3,153.3A3.1,3.1 0 0 1 582.7,157.7L568.8,171.4L562.3,173.4L564.4,167Z"/><path d="M564.4,167L568.8,171.4M579.2,156.8L567.2,168.7" fill="none" stroke-width="1.1"/></g><path d="M587.9,160.6H595.1L591.5,166.6Z" fill="#333"/><path d="M636.7,152.5V174" stroke="#c3c6ca" stroke-width="1.2" stroke-dasharray="2.5 2"/><rect x="640" y="158" width="15.5" height="3.6" fill="none" stroke="#c3c6ca" stroke-width="1.1"/><rect x="640" y="164.2" width="11.5" height="3.4" fill="none" stroke="#c3c6ca" stroke-width="1.1"/><path d="M661,160.7H668.2L664.6,166.7Z" fill="#c3c6ca"/><g fill="#fff" stroke="#43484e" stroke-width="1.3"><rect x="692.7" y="152" width="13.6" height="12.4" rx="1.5" stroke="#8d9196" stroke-dasharray="2 1.5" stroke-width="1.1"/><rect x="696.7" y="155.1" width="13.5" height="13.8"/><rect x="700.8" y="160.9" width="13.7" height="13.3"/></g><path d="M718.3,160.7H725.5L721.9,166.7Z" fill="#333"/><g fill="none" stroke="#43484e" stroke-width="1.3" stroke-linejoin="round"><path d="M750.4,155.3V170.8L758,163Z"/><path d="M772.5,155.3V170.8L764.8,163Z"/><path d="M761.6,151.8V175" stroke-dasharray="2.6 2" stroke-width="1.2"/></g><path d="M776.3,160.7H783.5L779.9,166.7Z" fill="#333"/><path d="M903.3,161.1L907,155.7L910.7,161.1Z M903.3,164.29999999999998L907,169.6L910.7,164.29999999999998Z" fill="#444"/><path d="M1012.8,161.1L1016.5,155.7L1020.2,161.1Z M1012.8,164.29999999999998L1016.5,169.6L1020.2,164.29999999999998Z" fill="#444"/><path d="M1152.1,163.6L1155.8,158.2L1159.5,163.6Z M1152.1,166.79999999999998L1155.8,172.1L1159.5,166.79999999999998Z" fill="#444"/><path d="M1279.8999999999999,161.3L1283.6,155.9L1287.3,161.3Z M1279.8999999999999,164.5L1283.6,169.8L1287.3,164.5Z" fill="#444"/><path d="M1382.5,161.3L1386.2,155.9L1389.9,161.3Z M1382.5,164.5L1386.2,169.8L1389.9,164.5Z" fill="#444"/><g fill="none" stroke="#b9bcc0" stroke-width="1.1"><path d="M918.4,148.6V144.4H926.5M945,144.4H953.2V148.6"/></g><g fill="none" stroke="#43484e" stroke-width="1.3"><rect x="929.3" y="142.6" width="11.6" height="8.8" rx="2.4"/><path d="M931.9,142.6V140.5A3.2,3.2 0 0 1 938.3,140.5V142.6"/><rect x="933.6" y="145.6" width="3" height="2.8" rx="0.8" stroke-width="1.1"/></g><path d="M1076,170.3A8,8 0 1 1 1081.3,161.3" fill="none" stroke="#43484e" stroke-width="1.6"/><path d="M1078,160.4H1084.8L1081.5,165.2Z" fill="#43484e"/><g fill="none" stroke="#adb0b4" stroke-width="1.2"><rect x="1697.4" y="160.5" width="19.4" height="15.6"/><rect x="1700.4" y="162.7" width="10" height="8.2"/><rect x="1704.7" y="167" width="10.2" height="7" fill="#e2e3e5"/><rect x="1695.8000000000002" y="158.9" width="3.2" height="3.2" fill="#e2e3e5"/><rect x="1715.2" y="158.9" width="3.2" height="3.2" fill="#e2e3e5"/><rect x="1695.8000000000002" y="174.5" width="3.2" height="3.2" fill="#e2e3e5"/><rect x="1715.2" y="174.5" width="3.2" height="3.2" fill="#e2e3e5"/><rect x="1782.2" y="159.4" width="11.2" height="11.2"/><rect x="1780.7" y="157.9" width="3" height="3" fill="#e2e3e5"/><rect x="1791.9" y="157.9" width="3" height="3" fill="#e2e3e5"/><rect x="1780.7" y="169.1" width="3" height="3" fill="#e2e3e5"/><rect x="1788" y="165.2" width="12.8" height="12.2" fill="#e2e3e5"/><rect x="1786.5" y="163.7" width="3" height="3" fill="#e2e3e5"/><rect x="1799.3" y="163.7" width="3" height="3" fill="#e2e3e5"/><rect x="1786.5" y="175.9" width="3" height="3" fill="#e2e3e5"/><rect x="1799.3" y="175.9" width="3" height="3" fill="#e2e3e5"/></g><g fill="none" stroke="#43484e" stroke-width="1.3" stroke-linejoin="round"><path d="M1879.8,176H1875V158H1889.8V160.6"/><rect x="1880" y="160.8" width="14.8" height="18.4" fill="#e2e3e5"/><path d="M1887.60,164.40L1888.95,167.94L1892.74,168.13L1889.79,170.51L1890.77,174.17L1887.60,172.10L1884.43,174.17L1885.41,170.51L1882.46,168.13L1886.25,167.94Z" stroke-width="1.1"/><path d="M1879.50,163.90L1880.68,166.88L1883.87,167.08L1881.40,169.12L1882.20,172.22L1879.50,170.50L1876.80,172.22L1877.60,169.12L1875.13,167.08L1878.32,166.88Z" stroke-width="1" clip-path="url(#cDup)"/></g><g transform="translate(1727.9,285.6) scale(0.0632) translate(-619.5,-611.6)"><use href="#petal" transform="translate(-496.5,2.8)" fill="#e8268c"/><g clip-path="url(#cPet)"><use href="#dots" fill="#fbe3f0" transform="translate(619.5,611.6) scale(0.93) translate(-619.5,-611.6)"/></g></g><g transform="translate(1727.8,386.1) scale(0.0632) translate(-1116,-608.7)"><use href="#petalR" fill="#fcb9de"/></g><path d="M1682.2,235.6H1692.4L1687.3,241.2Z" fill="#222"/><path d="M1682.2,336.2H1692.4L1687.3,341.8Z" fill="#222"/><g fill="none" stroke="#b3b6ba" stroke-width="1.25"><rect x="1688" y="1018.6" width="13.8" height="13.4"/><circle cx="1702.6" cy="1031.8" r="6.8"/><path d="M1748,1018.6H1761.8V1025.8A6.9,6.9 0 1 1 1755.7,1032.4H1748Z"/><path d="M1829.8,1027L1820.6,1018.9A3.4,3.4 0 0 0 1815.4,1023.4L1827.4,1037.4A3.9,3.9 0 0 0 1833.3,1032.2L1822.8,1021.4" stroke-linecap="round"/><path d="M1819.3,1024.2L1829,1035.2A1.8,1.8 0 0 0 1831.4,1033" stroke-linecap="round"/><path d="M1894.5,1017.5V1029M1891,1026L1894.5,1029.5L1898,1026"/><path d="M1889,1026.8L1884,1029.6L1894.5,1035L1905,1029.6L1900,1026.8"/><path d="M1884,1033.4L1894.5,1039L1905,1033.4"/></g><path d="M1652.8,232H1662.8L1657.8,226.4Z" fill="#a3a3a3"/><path d="M1652.8,1041.4H1662.8L1657.8,1047Z" fill="#444"/><path d="M137.5,1060.6V1072.8L130.6,1066.7Z" fill="#8a8a8a"/><path d="M1632.8,1060.6V1072.8L1639.7,1066.7Z" fill="#333"/></svg>
</body></html>
